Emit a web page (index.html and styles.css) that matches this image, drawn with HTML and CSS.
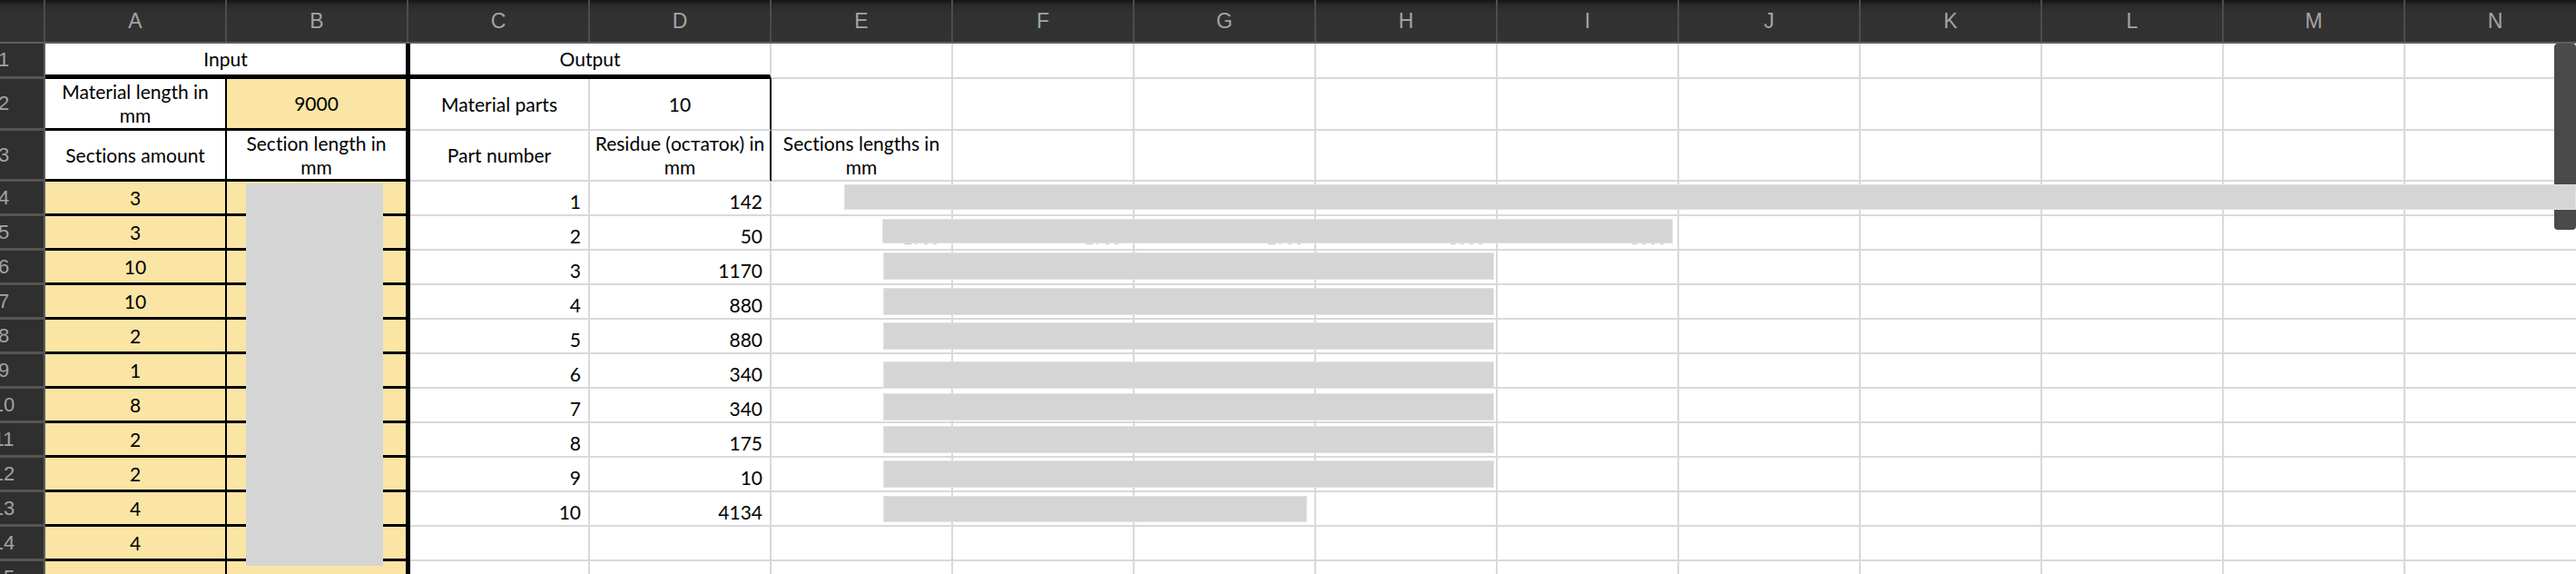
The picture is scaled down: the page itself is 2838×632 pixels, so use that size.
FILE: index.html
```html
<!DOCTYPE html>
<html lang="en">
<head>
<meta charset="utf-8">
<title>Cutting sheet</title>
<link rel="stylesheet" href="styles.css">
</head>
<body>
<div class="app">
  <div class="colhead">
    <div></div><div>A</div><div>B</div><div>C</div><div>D</div><div>E</div><div>F</div><div>G</div><div>H</div><div>I</div><div>J</div><div>K</div><div>L</div><div>M</div><div>N</div>
  </div>
  <div class="sheet">
    <div class="rh"><span>1</span></div>
    <div class="c title-in">Input</div>
    <div class="c title-out">Output</div>
    <div class="rest"></div>

    <div class="rh"><span>2</span></div>
    <div class="c ia">Material length in<br>mm</div>
    <div class="c ib y">9000</div>
    <div class="c">Material parts</div>
    <div class="c od">10</div>
    <div class="rest"></div>

    <div class="rh"><span>3</span></div>
    <div class="c ia">Sections amount</div>
    <div class="c ib">Section length in<br>mm</div>
    <div class="c">Part number</div>
    <div class="c od">Residue (остаток) in<br>mm</div>
    <div class="c">Sections lengths in<br>mm</div>
    <div class="rest nine"></div>

    <div class="rh"><span>4</span></div>
    <div class="c ia y">3</div><div class="c ib y"></div>
    <div class="c num">1</div><div class="c num">142</div>
    <div class="rest"></div>

    <div class="rh"><span>5</span></div>
    <div class="c ia y">3</div><div class="c ib y"></div>
    <div class="c num">2</div><div class="c num">50</div>
    <div class="rest"></div>

    <div class="rh"><span>6</span></div>
    <div class="c ia y">10</div><div class="c ib y"></div>
    <div class="c num">3</div><div class="c num">1170</div>
    <div class="rest"></div>

    <div class="rh"><span>7</span></div>
    <div class="c ia y">10</div><div class="c ib y"></div>
    <div class="c num">4</div><div class="c num">880</div>
    <div class="rest"></div>

    <div class="rh"><span>8</span></div>
    <div class="c ia y">2</div><div class="c ib y"></div>
    <div class="c num">5</div><div class="c num">880</div>
    <div class="rest"></div>

    <div class="rh"><span>9</span></div>
    <div class="c ia y">1</div><div class="c ib y"></div>
    <div class="c num">6</div><div class="c num">340</div>
    <div class="rest"></div>

    <div class="rh"><span>10</span></div>
    <div class="c ia y">8</div><div class="c ib y"></div>
    <div class="c num">7</div><div class="c num">340</div>
    <div class="rest"></div>

    <div class="rh"><span>11</span></div>
    <div class="c ia y">2</div><div class="c ib y"></div>
    <div class="c num">8</div><div class="c num">175</div>
    <div class="rest"></div>

    <div class="rh"><span>12</span></div>
    <div class="c ia y">2</div><div class="c ib y"></div>
    <div class="c num">9</div><div class="c num">10</div>
    <div class="rest"></div>

    <div class="rh"><span>13</span></div>
    <div class="c ia y">4</div><div class="c ib y"></div>
    <div class="c num">10</div><div class="c num">4134</div>
    <div class="rest"></div>

    <div class="rh"><span>14</span></div>
    <div class="c ia y">4</div><div class="c ib y"></div>
    <div class="c"></div><div class="c"></div>
    <div class="rest"></div>

    <div class="rh"><span>15</span></div>
    <div class="c ia y"></div><div class="c ib y"></div>
    <div class="c"></div><div class="c"></div>
    <div class="rest"></div>
  </div>

  <div class="thumb"></div>
  <span class="tick t1">2700</span>
  <span class="tick t2">2700</span>
  <span class="tick t3">2700</span>
  <span class="tick t4">3000</span>
  <span class="tick t5">3000</span>

  <div class="mask mask-b"></div>
  <div class="mask bar4"></div>
  <div class="mask bar5"></div>
  <div class="mask bar-full bar6"></div>
  <div class="mask bar-full bar7"></div>
  <div class="mask bar-full bar8"></div>
  <div class="mask bar-full bar9"></div>
  <div class="mask bar-full bar10"></div>
  <div class="mask bar-full bar11"></div>
  <div class="mask bar-full bar12"></div>
  <div class="mask bar13"></div>
</div>
</body>
</html>
```

FILE: styles.css
```css
:root {
  --grid: #d9d9d9;
  --yellow: #fae5a5;
  --mask: #d5d5d5;
}

* { box-sizing: border-box; }

html, body {
  margin: 0;
  padding: 0;
  background: #fff;
  overflow: hidden;
}

.app {
  position: relative;
  width: 2838px;
  height: 632px;
  overflow: hidden;
  font-family: Lato, "Open Sans", sans-serif;
  font-variant-ligatures: none;
  font-feature-settings: "liga" 0, "dlig" 0;
}

/* column header bar */
.colhead {
  display: grid;
  grid-template-columns: 50px repeat(14, 200px);
  height: 48px;
  background: linear-gradient(#141414 0, #2a2a2a 6px, #313131 14px, #323232 100%);
  border-bottom: 2px solid #5e5e5e;
  font-family: "Liberation Sans", Arial, sans-serif;
  font-size: 23px;
  color: #a4a4a4;
}

.colhead div {
  display: flex;
  align-items: center;
  justify-content: center;
  border-right: 2px solid #4c4c4c;
  padding-top: 1px;
}

/* grid */
.sheet {
  display: grid;
  grid-template-columns: 50px 200px 202px 198px 200px repeat(10, 200px);
  grid-template-rows: 39px 57px 56px repeat(12, 38px);
  font-size: 21px;
  color: #000;
}

.rh {
  background: #2f2f2f;
  border-right: 2px solid #5e5e5e;
  border-bottom: 3px solid #555;
  display: flex;
  align-items: center;
  overflow: hidden;
  font-family: "Liberation Sans", Arial, sans-serif;
  font-size: 22px;
  color: #a3a3a3;
}

.rh span {
  flex: none;
  width: 8px;
  display: flex;
  justify-content: center;
  white-space: nowrap;
}

.c {
  display: flex;
  align-items: center;
  justify-content: center;
  text-align: center;
  line-height: 26px;
  border-right: 2px solid var(--grid);
  border-bottom: 2px solid var(--grid);
  white-space: nowrap;
}

.rest {
  grid-column: span 10;
  border-bottom: 2px solid var(--grid);
  background: repeating-linear-gradient(to right, transparent 0 198px, var(--grid) 198px 200px);
}

.rest.nine { grid-column: span 9; }

.title-in {
  grid-column: span 2;
  border-right: 5px solid #000;
  border-bottom: 5px solid #000;
}

.title-out {
  grid-column: span 2;
  border-bottom: 5px solid #000;
}

.ia {
  border-right: 2px solid #000;
  border-bottom: 3px solid #000;
}

.ib {
  border-right: 5px solid #000;
  border-bottom: 3px solid #000;
}

.od { border-right: 2px solid #000; }

.y { background: var(--yellow); }

.num {
  justify-content: flex-end;
  align-items: flex-end;
  line-height: 24px;
  padding: 0 8px 2px 0;
}

/* overlays */
.thumb {
  position: absolute;
  left: 2814px;
  top: 48px;
  width: 24px;
  height: 205px;
  background: #4a4a4a;
  border-radius: 4px;
}

.tick {
  position: absolute;
  top: 254px;
  font-family: "Liberation Sans", Arial, sans-serif;
  font-size: 18px;
  line-height: 18px;
  color: #c4c4c4;
}
.t1 { left: 995px; }
.t2 { left: 1195px; }
.t3 { left: 1396px; }
.t4 { left: 1596px; }
.t5 { left: 1796px; }

.mask {
  position: absolute;
  background: var(--mask);
  border: 1px solid #e2e2e2;
}

.mask-b { left: 271px; top: 202px; width: 151px; height: 421px; border: none; }
.bar4 { left: 930px; top: 203px; width: 1908px; height: 28px; }
.bar5 { left: 972px; top: 241px; width: 871px; height: 27px; }
.bar-full { left: 973px; width: 673px; height: 30px; }
.bar6 { top: 278px; }
.bar7 { top: 317px; }
.bar8 { top: 355px; }
.bar9 { top: 398px; }
.bar10 { top: 433px; }
.bar11 { top: 469px; }
.bar12 { top: 507px; }
.bar13 { left: 973px; top: 546px; width: 467px; height: 29px; }
```
